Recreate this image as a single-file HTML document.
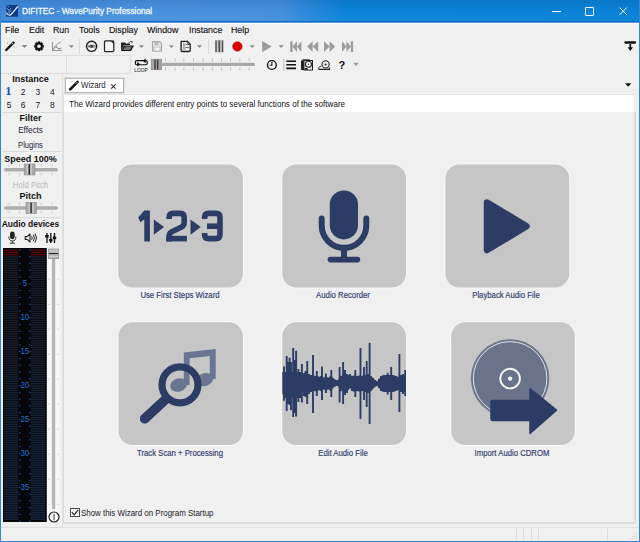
<!DOCTYPE html>
<html><head><meta charset="utf-8">
<style>
*{margin:0;padding:0;box-sizing:border-box}
html,body{width:640px;height:542px;overflow:hidden;background:#f0f0f0;font-family:"Liberation Sans",sans-serif;color:#000}
.a{position:absolute}
.t{position:absolute;white-space:nowrap;line-height:1}
svg{position:absolute;overflow:visible}
</style></head><body>
<!-- window frame -->
<div class="a" style="left:0;top:0;width:640px;height:542px;background:#f0f0f0"></div>
<!-- title bar -->
<div class="a" style="left:0;top:0;width:640px;height:22px;background:linear-gradient(to right,#3f89d8 0,#4a92de 120px,#4690dd 280px,#2a88da 310px,#0c84d8 345px,#0a82d6 640px)"></div><div class="a" style="left:0;top:0;width:640px;height:22px;background:linear-gradient(to bottom,rgba(0,40,110,0.12),rgba(0,40,110,0) 55%,rgba(255,255,255,0.03) 100%)"></div>
<div class="a" style="left:0;top:21px;width:640px;height:1px;background:#0a6ec6"></div><div class="a" style="left:0;top:22px;width:640px;height:1px;background:#5a9ad6"></div><div class="a" style="left:1px;top:23px;width:638px;height:1px;background:#fbfbfb"></div>
<div class="a" style="left:0;top:0;width:1px;height:542px;background:#3a84d0"></div>
<div class="a" style="left:639px;top:0;width:1px;height:542px;background:#3a84d0"></div>
<div class="a" style="left:0;top:541px;width:640px;height:1px;background:#3a84d0"></div>
<!-- app icon -->
<svg style="left:0;top:0" width="30" height="22" viewBox="0 0 30 22">
<rect x="6.3" y="5" width="11.7" height="11.7" fill="#0b3d86"/>
<path d="M6.5 12.8Q8.3 15.6 10 15.2Q12 14 17.8 6.4" stroke="#f0f4fa" stroke-width="1.2" fill="none"/>
<path d="M7 8.2Q9.8 9.5 9.2 13.8" stroke="#9bb8de" stroke-width="0.9" fill="none"/>
<path d="M7.2 5.8Q8.5 6.2 9 7" stroke="#9bb8de" stroke-width="0.8" fill="none"/>
<path d="M10.5 8Q11.2 10 10.6 12" stroke="#6f95c8" stroke-width="0.8" fill="none"/>
</svg>
<div class="t" style="left:22px;top:6.4px;font-size:9.8px;color:#f2f7fc;transform:scaleX(0.85);transform-origin:0 0;-webkit-text-stroke:0.3px #f2f7fc">DIFITEC - WavePurity Professional</div>
<!-- caption buttons -->
<div class="a" style="left:552px;top:11px;width:8.6px;height:1px;background:#f4f8fc"></div>
<div class="a" style="left:585px;top:7px;width:8.6px;height:8.6px;border:1px solid #f4f8fc;border-radius:1px"></div>
<svg style="left:619px;top:7px" width="9" height="9" viewBox="0 0 9 9"><path d="M0.6 0.6L7.8 7.8M7.8 0.6L0.6 7.8" stroke="#f4f8fc" stroke-width="1"/></svg>

<!-- menu -->
<div class="t" style="left:5px;top:24.5px;font-size:9.8px;color:#111;transform:scaleX(0.9);transform-origin:0 0;-webkit-text-stroke:0.15px #111">File</div>
<div class="t" style="left:29px;top:24.5px;font-size:9.8px;color:#111;transform:scaleX(0.9);transform-origin:0 0;-webkit-text-stroke:0.15px #111">Edit</div>
<div class="t" style="left:53px;top:24.5px;font-size:9.8px;color:#111;transform:scaleX(0.9);transform-origin:0 0;-webkit-text-stroke:0.15px #111">Run</div>
<div class="t" style="left:79px;top:24.5px;font-size:9.8px;color:#111;transform:scaleX(0.9);transform-origin:0 0;-webkit-text-stroke:0.15px #111">Tools</div>
<div class="t" style="left:109px;top:24.5px;font-size:9.8px;color:#111;transform:scaleX(0.9);transform-origin:0 0;-webkit-text-stroke:0.15px #111">Display</div>
<div class="t" style="left:147px;top:24.5px;font-size:9.8px;color:#111;transform:scaleX(0.9);transform-origin:0 0;-webkit-text-stroke:0.15px #111">Window</div>
<div class="t" style="left:189px;top:24.5px;font-size:9.8px;color:#111;transform:scaleX(0.9);transform-origin:0 0;-webkit-text-stroke:0.15px #111">Instance</div>
<div class="t" style="left:231px;top:24.5px;font-size:9.8px;color:#111;transform:scaleX(0.9);transform-origin:0 0;-webkit-text-stroke:0.15px #111">Help</div>

<!-- toolbar row1 -->
<svg style="left:0;top:0" width="640" height="80" viewBox="0 0 640 80">
<!-- wand -->
<line x1="6.2" y1="50" x2="13.6" y2="42.6" stroke="#111" stroke-width="2.3" stroke-linecap="round"/>
<line x1="12" y1="44.2" x2="13.2" y2="43" stroke="#ddd" stroke-width="0.9"/>
<circle cx="7.5" cy="43" r="0.7" fill="#aaa"/><circle cx="14.2" cy="46.8" r="0.7" fill="#aaa"/><circle cx="10" cy="41.5" r="0.5" fill="#bbb"/>
<path d="M21.5 45H27.5L24.5 48Z" fill="#8c8c8c"/>
<!-- gear -->
<path d="M42.23 44.96 L43.78 45.23 L43.78 47.37 L42.23 47.64 L42.23 47.64 L43.14 48.93 L41.63 50.44 L40.34 49.53 L40.34 49.53 L40.07 51.08 L37.93 51.08 L37.66 49.53 L37.66 49.53 L36.37 50.44 L34.86 48.93 L35.77 47.64 L35.77 47.64 L34.22 47.37 L34.22 45.23 L35.77 44.96 L35.77 44.96 L34.86 43.67 L36.37 42.16 L37.66 43.07 L37.66 43.07 L37.93 41.52 L40.07 41.52 L40.34 43.07 L40.34 43.07 L41.63 42.16 L43.14 43.67 L42.23 44.96Z" fill="#111" stroke="#111" stroke-width="0.3" stroke-linejoin="round"/>
<circle cx="39" cy="46.3" r="1.8" fill="#f0f0f0"/>
<!-- chart grey -->
<path d="M52.5 42V50.5H62" stroke="#9a9a9a" stroke-width="1.1" fill="none" stroke-dasharray="none"/>
<path d="M53.5 50Q55 45 57 47.5Q59 50 61 48" stroke="#8a8a8a" stroke-width="1.1" fill="none"/>
<path d="M54 48Q57 43 61 42" stroke="#9a9a9a" stroke-width="1" fill="none"/>
<path d="M68.7 45.2H74L71.35 48Z" fill="#8c8c8c"/>
<!-- sep -->
<rect x="79" y="39" width="1" height="15" fill="#dadada"/>
<!-- disc -->
<circle cx="91.6" cy="46.3" r="5.1" stroke="#1e1e1e" stroke-width="1.4" fill="#f2f2f2"/>
<ellipse cx="91.6" cy="46.3" rx="4.2" ry="1.7" fill="#8a8a8a"/>
<circle cx="91.6" cy="46.3" r="1.3" fill="#333"/>
<!-- page -->
<path d="M105.6 40.9H111.4L113.8 43.3V50.6Q113.8 51.7 112.7 51.7H105.6Q104.5 51.7 104.5 50.6V42Q104.5 40.9 105.6 40.9Z" stroke="#222" stroke-width="1.25" fill="#f6f6f6" stroke-linejoin="round"/>
<path d="M111 40.6L114.2 43.8V40.6Z" fill="#222"/>
<!-- folder -->
<path d="M121 42.5H125L126 43.5H130V45H124L121 50.5Z" fill="#222"/>
<path d="M121 51H131L134 45.5H124Z" fill="#111"/>
<path d="M123 50L125.2 46.5H132L130 50Z" fill="#777"/>
<path d="M128.5 43Q130.5 40.5 132.5 42" stroke="#333" stroke-width="0.9" fill="none"/><path d="M132 41L133 42.5L131.4 42.7Z" fill="#333"/>
<path d="M138.8 45.3H144L141.4 48Z" fill="#8c8c8c"/>
<!-- save grey -->
<path d="M152.5 41.5H159.5L161.5 43.5V51H152.5Z" stroke="#a8a8a8" stroke-width="1.1" fill="#e4e4e4"/>
<rect x="154.5" y="41.5" width="4" height="3.5" fill="#b8b8b8"/><rect x="154" y="47" width="6" height="4" fill="#f4f4f4" stroke="#b0b0b0" stroke-width="0.7"/>
<path d="M168.8 45.3H174L171.4 48Z" fill="#8c8c8c"/>
<!-- props -->
<path d="M181.1 41.4H187.4L190.2 44.2V50.2Q190.2 51.5 188.9 51.5H182.4Q181.1 51.5 181.1 50.2Z" stroke="#1e1e1e" stroke-width="1.35" fill="#f6f6f6" stroke-linejoin="round"/>
<path d="M183.4 42.8V50.3M184.8 42.8V50.3" stroke="#777" stroke-width="0.7"/>
<path d="M185.6 44.6H188.8M185.6 47.6H188.8M187 42.6L189.5 45.2" stroke="#444" stroke-width="0.9"/>
<path d="M196.8 45.3H202.2L199.5 48Z" fill="#8c8c8c"/>
<rect x="208" y="39" width="1" height="15" fill="#dadada"/>
<!-- bars -->
<rect x="215.4" y="40.4" width="7.8" height="11.8" fill="#9a9a9a"/>
<rect x="215.4" y="40.4" width="1.1" height="11.8" fill="#4a4a4a"/><rect x="218.8" y="40.4" width="1" height="11.8" fill="#3e3e3e"/><rect x="222.1" y="40.4" width="1.1" height="11.8" fill="#4a4a4a"/>
<rect x="217" y="40.4" width="1" height="11.8" fill="#c8c8c8"/><rect x="220.5" y="40.4" width="1" height="11.8" fill="#c8c8c8"/>
<!-- record -->
<circle cx="237.4" cy="46.5" r="4.75" fill="#dc0000" stroke="#b00000" stroke-width="0.5"/>
<path d="M249.5 45.3H254.8L252.15 48Z" fill="#8c8c8c"/>
<!-- play grey -->
<path d="M262.2 41V52.2L271.6 46.6Z" fill="#9c9c9c"/>
<path d="M278.6 45.3H283.8L281.2 48Z" fill="#8c8c8c"/>
<!-- skip back -->
<path d="M290.2 41.2H292.6V52H290.2Z M292.6 46.6L297 41.2V52Z M297 46.6L301.4 41.2V52Z" fill="#9c9c9c"/>
<!-- rewind -->
<path d="M307 46.6L312.6 41.2V52Z M312.6 46.6L318.2 41.2V52Z" fill="#9c9c9c"/>
<!-- ff -->
<path d="M324 41.2V52L329.6 46.6Z M329.6 41.2V52L335.2 46.6Z" fill="#9c9c9c"/>
<!-- skip fwd -->
<path d="M342 41.2V52L346.4 46.6Z M346.4 41.2V52L350.8 46.6Z M350.8 41.2H353.2V52H350.8Z" fill="#9c9c9c"/>
<!-- pin right -->
<path d="M625.4 42.5H635" stroke="#111" stroke-width="2.3" stroke-linecap="round"/><path d="M630.3 44V48.5" stroke="#111" stroke-width="1.6"/><path d="M627.6 47.2H633L630.3 51Z" fill="#111"/>
</svg>


<!-- row 2 panes -->
<div class="a" style="left:1px;top:55px;width:130px;height:19px;border:1px solid #dcdcdc;border-left:none"></div>
<div class="a" style="left:66px;top:55px;width:1px;height:19px;background:#dcdcdc"></div>
<svg style="left:0;top:0" width="640" height="80" viewBox="0 0 640 80">
<!-- loop -->
<rect x="135.4" y="60.6" width="11.8" height="4.1" rx="1.2" stroke="#111" stroke-width="1.15" fill="none"/>
<path d="M145.6 58.4V63.2L142.6 60.8Z" fill="#111"/>
<path d="M137.2 61.8V66.6L140.2 64.2Z" fill="#111"/>
<text x="134.2" y="71.6" font-family="Liberation Sans" font-size="6" fill="#151515" textLength="13.6" lengthAdjust="spacingAndGlyphs">LOOP</text>
<!-- slider -->
<rect x="162" y="62.8" width="93" height="3.1" rx="1.5" fill="#a9a9a9"/>
<g stroke="#bdbdbd" stroke-width="0.9">
<path d="M165.5 58V61.3M175.1 58V61.3M183.9 58V61.3M193.5 58V61.3M203.1 58V61.3M212.4 58V61.3M221.5 58V61.3M230.6 58V61.3M239.9 58V61.3M249.2 58V61.3"/>
<path d="M165.5 67.3V70.6M175.1 67.3V70.6M183.9 67.3V70.6M193.5 67.3V70.6M203.1 67.3V70.6M212.4 67.3V70.6M221.5 67.3V70.6M230.6 67.3V70.6M239.9 67.3V70.6M249.2 67.3V70.6"/>
</g>
<rect x="151.2" y="59.2" width="10.5" height="10.6" fill="#a4a4a4" stroke="#8a8a8a" stroke-width="0.6"/>
<rect x="154.4" y="59.5" width="1.3" height="10" fill="#333"/><rect x="157" y="59.5" width="1.3" height="10" fill="#333"/>
<!-- clock -->
<circle cx="271.9" cy="65" r="4.4" stroke="#111" stroke-width="1.4" fill="#f4f4f4"/>
<path d="M271.9 62V65.3H269.8" stroke="#111" stroke-width="1.1" fill="none"/>
<!-- list -->
<path d="M286.3 61.2H296M286.3 64.8H296M286.3 68.4H296" stroke="#111" stroke-width="1.6"/>
<path d="M283.8 59V70.8" stroke="#999" stroke-width="0.9" stroke-dasharray="1 0.6"/>
<!-- cd book -->
<path d="M301 60.5L303 59H310L309 60.5Z" fill="#666"/>
<rect x="301" y="60.5" width="3" height="9.5" fill="#222"/>
<rect x="304" y="60.5" width="8.5" height="9.5" fill="#eee" stroke="#222" stroke-width="1"/>
<circle cx="308.5" cy="64.3" r="3" fill="#fff" stroke="#222" stroke-width="1.1"/><circle cx="308.5" cy="64.3" r="0.8" fill="#222"/>
<rect x="305" y="68" width="2.5" height="2" fill="#222"/>
<!-- scan -->
<circle cx="325.6" cy="64.4" r="3.6" fill="#eee" stroke="#222" stroke-width="1.1"/><circle cx="325.6" cy="64.4" r="1" fill="#222"/>
<path d="M318.5 69.3H329.5V67.5" stroke="#222" stroke-width="1.2" fill="none"/>
<path d="M318.3 69.3Q318 66.5 321.5 66" stroke="#444" stroke-width="1" fill="none"/>
<!-- ? -->
<text x="338.6" y="69.2" font-family="Liberation Sans" font-size="11" font-weight="bold" fill="#111">?</text>
<path d="M353 62.8H358.8L355.9 65.9Z" fill="#9a9a9a"/>
</svg>

<!-- left panel -->
<div class="t" style="left:0;width:61px;text-align:center;top:75.2px;font-size:9px;font-weight:bold;color:#111">Instance</div>
<div class="t" style="left:5.2px;top:85.2px;font-size:12.5px;font-weight:bold;font-family:'Liberation Serif',serif;color:#1d56a6">1</div>
<div class="t" style="left:20.8px;top:87.6px;font-size:8.5px;color:#1a1a2a">2</div>
<div class="t" style="left:35.6px;top:87.6px;font-size:8.5px;color:#1a1a2a">3</div>
<div class="t" style="left:50px;top:87.6px;font-size:8.5px;color:#1a1a2a">4</div>
<div class="t" style="left:6.8px;top:100.8px;font-size:8.5px;color:#1a1a2a">5</div>
<div class="t" style="left:20.8px;top:100.8px;font-size:8.5px;color:#1a1a2a">6</div>
<div class="t" style="left:35.6px;top:100.8px;font-size:8.5px;color:#1a1a2a">7</div>
<div class="t" style="left:50px;top:100.8px;font-size:8.5px;color:#1a1a2a">8</div>
<div class="a" style="left:2px;top:112px;width:59px;height:1px;background:#dadada"></div>
<div class="t" style="left:0;width:61px;text-align:center;top:114.4px;font-size:9px;font-weight:bold;color:#111">Filter</div>
<div class="t" style="left:0;width:61px;text-align:center;top:126px;font-size:9px;color:#1c2238;transform:scaleX(0.9);transform-origin:30.5px 0">Effects</div>
<div class="t" style="left:0;width:61px;text-align:center;top:140.6px;font-size:9px;color:#1c2238;transform:scaleX(0.84);transform-origin:30.5px 0">Plugins</div>
<div class="a" style="left:2px;top:151px;width:59px;height:1px;background:#dadada"></div>
<div class="t" style="left:0;width:61px;text-align:center;top:155px;font-size:9px;font-weight:bold;color:#111">Speed 100%</div>
<div class="t" style="left:0;width:61px;text-align:center;top:180.8px;font-size:9px;color:#b8b8b8;transform:scaleX(0.86);transform-origin:30.5px 0">Hold Pitch</div>
<div class="t" style="left:0;width:61px;text-align:center;top:192.4px;font-size:9px;font-weight:bold;color:#111">Pitch</div>
<div class="a" style="left:2px;top:217px;width:59px;height:1px;background:#dadada"></div>
<div class="t" style="left:0;width:61px;text-align:center;top:220.2px;font-size:8.5px;font-weight:bold;color:#111">Audio devices</div>
<svg style="left:0;top:0" width="64" height="542" viewBox="0 0 64 542">
<!-- speed slider -->
<g stroke="#c4c4c4" stroke-width="0.9"><path d="M9 164V166.5M19.5 164V166.5M41 164V166.5M52 164V166.5M9 173V175.5M19.5 173V175.5M41 173V175.5M52 173V175.5"/>
<path d="M9 202.5V205M19.5 202.5V205M41 202.5V205M52 202.5V205M9 211V213.5M19.5 211V213.5M41 211V213.5M52 211V213.5"/></g>
<rect x="4" y="168" width="54" height="3.4" rx="1.7" fill="#acacac"/>
<rect x="24.2" y="164" width="10.8" height="11" fill="#a8a8a8" stroke="#8c8c8c" stroke-width="0.6"/>
<rect x="26.6" y="164.3" width="1.2" height="10.4" fill="#cfcfcf"/><rect x="28.7" y="164.3" width="1.2" height="10.4" fill="#1a1a1a"/><rect x="30.6" y="164.3" width="1.2" height="10.4" fill="#d2d2d2"/>
<!-- pitch slider -->
<rect x="4" y="206.3" width="54" height="3.4" rx="1.7" fill="#acacac"/>
<rect x="26" y="202.4" width="10.4" height="11" fill="#a8a8a8" stroke="#8c8c8c" stroke-width="0.6"/>
<rect x="28.4" y="202.7" width="1.2" height="10.4" fill="#cfcfcf"/><rect x="30.5" y="202.7" width="1.2" height="10.4" fill="#1a1a1a"/><rect x="32.4" y="202.7" width="1.2" height="10.4" fill="#d2d2d2"/>
<!-- mic -->
<rect x="10" y="231.6" width="4.7" height="7.6" rx="2.35" fill="#222"/>
<path d="M8.8 236.5Q8.8 241 12.35 241Q15.9 241 15.9 236.5" stroke="#333" stroke-width="1" fill="none"/>
<path d="M12.35 241V243M9.6 243.2H15" stroke="#333" stroke-width="1"/>
<!-- speaker -->
<path d="M25.2 236.6H27.1L30 234V242L27.1 239.4H25.2Z" stroke="#222" stroke-width="1.1" fill="#f0f0f0" stroke-linejoin="round"/>
<path d="M31.6 236.3Q32.8 238 31.6 239.7M33.3 234.8Q35.4 238 33.3 241.2M35 233.4Q38 238 35 242.6" stroke="#222" stroke-width="1" fill="none"/>
<!-- mixer -->
<path d="M47 233V243M50.8 233V243M54.5 233V243" stroke="#111" stroke-width="1.3"/>
<rect x="45.3" y="235" width="3.4" height="2.6" fill="#111"/><rect x="49.1" y="239" width="3.4" height="2.6" fill="#111"/><rect x="52.8" y="236.5" width="3.4" height="2.6" fill="#111"/>
</svg>
<div class="a" style="left:3px;top:248px;width:43.6px;height:273.8px;background:#05070a"></div>
<svg style="left:0;top:0" width="64" height="542" viewBox="0 0 64 542">
<rect x="4" y="249.60" width="14.2" height="1.2" fill="#660808"/><rect x="31" y="249.60" width="14.2" height="1.2" fill="#660808"/><rect x="4" y="251.86" width="14.2" height="1.2" fill="#660808"/><rect x="31" y="251.86" width="14.2" height="1.2" fill="#660808"/><rect x="4" y="254.12" width="14.2" height="1.2" fill="#660808"/><rect x="31" y="254.12" width="14.2" height="1.2" fill="#660808"/><rect x="4" y="256.39" width="14.2" height="1.2" fill="#1b2330"/><rect x="31" y="256.39" width="14.2" height="1.2" fill="#1b2330"/><rect x="4" y="258.65" width="14.2" height="1.2" fill="#1b2330"/><rect x="31" y="258.65" width="14.2" height="1.2" fill="#1b2330"/><rect x="4" y="260.91" width="14.2" height="1.2" fill="#1b2330"/><rect x="31" y="260.91" width="14.2" height="1.2" fill="#1b2330"/><rect x="4" y="263.17" width="14.2" height="1.2" fill="#1b2330"/><rect x="31" y="263.17" width="14.2" height="1.2" fill="#1b2330"/><rect x="4" y="265.43" width="14.2" height="1.2" fill="#1b2330"/><rect x="31" y="265.43" width="14.2" height="1.2" fill="#1b2330"/><rect x="4" y="267.70" width="14.2" height="1.2" fill="#1b2330"/><rect x="31" y="267.70" width="14.2" height="1.2" fill="#1b2330"/><rect x="4" y="269.96" width="14.2" height="1.2" fill="#1b2330"/><rect x="31" y="269.96" width="14.2" height="1.2" fill="#1b2330"/><rect x="4" y="272.22" width="14.2" height="1.2" fill="#1b2330"/><rect x="31" y="272.22" width="14.2" height="1.2" fill="#1b2330"/><rect x="4" y="274.48" width="14.2" height="1.2" fill="#1b2330"/><rect x="31" y="274.48" width="14.2" height="1.2" fill="#1b2330"/><rect x="4" y="276.74" width="14.2" height="1.2" fill="#1b2330"/><rect x="31" y="276.74" width="14.2" height="1.2" fill="#1b2330"/><rect x="4" y="279.01" width="14.2" height="1.2" fill="#1b2330"/><rect x="31" y="279.01" width="14.2" height="1.2" fill="#1b2330"/><rect x="4" y="281.27" width="14.2" height="1.2" fill="#1b2330"/><rect x="31" y="281.27" width="14.2" height="1.2" fill="#1b2330"/><rect x="4" y="283.53" width="14.2" height="1.2" fill="#1b2330"/><rect x="31" y="283.53" width="14.2" height="1.2" fill="#1b2330"/><rect x="4" y="285.79" width="14.2" height="1.2" fill="#1b2330"/><rect x="31" y="285.79" width="14.2" height="1.2" fill="#1b2330"/><rect x="4" y="288.05" width="14.2" height="1.2" fill="#1b2330"/><rect x="31" y="288.05" width="14.2" height="1.2" fill="#1b2330"/><rect x="4" y="290.32" width="14.2" height="1.2" fill="#1b2330"/><rect x="31" y="290.32" width="14.2" height="1.2" fill="#1b2330"/><rect x="4" y="292.58" width="14.2" height="1.2" fill="#1b2330"/><rect x="31" y="292.58" width="14.2" height="1.2" fill="#1b2330"/><rect x="4" y="294.84" width="14.2" height="1.2" fill="#1b2330"/><rect x="31" y="294.84" width="14.2" height="1.2" fill="#1b2330"/><rect x="4" y="297.10" width="14.2" height="1.2" fill="#1b2330"/><rect x="31" y="297.10" width="14.2" height="1.2" fill="#1b2330"/><rect x="4" y="299.36" width="14.2" height="1.2" fill="#1b2330"/><rect x="31" y="299.36" width="14.2" height="1.2" fill="#1b2330"/><rect x="4" y="301.63" width="14.2" height="1.2" fill="#1b2330"/><rect x="31" y="301.63" width="14.2" height="1.2" fill="#1b2330"/><rect x="4" y="303.89" width="14.2" height="1.2" fill="#1b2330"/><rect x="31" y="303.89" width="14.2" height="1.2" fill="#1b2330"/><rect x="4" y="306.15" width="14.2" height="1.2" fill="#1b2330"/><rect x="31" y="306.15" width="14.2" height="1.2" fill="#1b2330"/><rect x="4" y="308.41" width="14.2" height="1.2" fill="#1b2330"/><rect x="31" y="308.41" width="14.2" height="1.2" fill="#1b2330"/><rect x="4" y="310.67" width="14.2" height="1.2" fill="#1b2330"/><rect x="31" y="310.67" width="14.2" height="1.2" fill="#1b2330"/><rect x="4" y="312.94" width="14.2" height="1.2" fill="#1b2330"/><rect x="31" y="312.94" width="14.2" height="1.2" fill="#1b2330"/><rect x="4" y="315.20" width="14.2" height="1.2" fill="#1b2330"/><rect x="31" y="315.20" width="14.2" height="1.2" fill="#1b2330"/><rect x="4" y="317.46" width="14.2" height="1.2" fill="#1b2330"/><rect x="31" y="317.46" width="14.2" height="1.2" fill="#1b2330"/><rect x="4" y="319.72" width="14.2" height="1.2" fill="#1b2330"/><rect x="31" y="319.72" width="14.2" height="1.2" fill="#1b2330"/><rect x="4" y="321.98" width="14.2" height="1.2" fill="#1b2330"/><rect x="31" y="321.98" width="14.2" height="1.2" fill="#1b2330"/><rect x="4" y="324.25" width="14.2" height="1.2" fill="#1b2330"/><rect x="31" y="324.25" width="14.2" height="1.2" fill="#1b2330"/><rect x="4" y="326.51" width="14.2" height="1.2" fill="#1b2330"/><rect x="31" y="326.51" width="14.2" height="1.2" fill="#1b2330"/><rect x="4" y="328.77" width="14.2" height="1.2" fill="#1b2330"/><rect x="31" y="328.77" width="14.2" height="1.2" fill="#1b2330"/><rect x="4" y="331.03" width="14.2" height="1.2" fill="#1b2330"/><rect x="31" y="331.03" width="14.2" height="1.2" fill="#1b2330"/><rect x="4" y="333.29" width="14.2" height="1.2" fill="#1b2330"/><rect x="31" y="333.29" width="14.2" height="1.2" fill="#1b2330"/><rect x="4" y="335.56" width="14.2" height="1.2" fill="#1b2330"/><rect x="31" y="335.56" width="14.2" height="1.2" fill="#1b2330"/><rect x="4" y="337.82" width="14.2" height="1.2" fill="#1b2330"/><rect x="31" y="337.82" width="14.2" height="1.2" fill="#1b2330"/><rect x="4" y="340.08" width="14.2" height="1.2" fill="#1b2330"/><rect x="31" y="340.08" width="14.2" height="1.2" fill="#1b2330"/><rect x="4" y="342.34" width="14.2" height="1.2" fill="#1b2330"/><rect x="31" y="342.34" width="14.2" height="1.2" fill="#1b2330"/><rect x="4" y="344.60" width="14.2" height="1.2" fill="#1b2330"/><rect x="31" y="344.60" width="14.2" height="1.2" fill="#1b2330"/><rect x="4" y="346.87" width="14.2" height="1.2" fill="#1b2330"/><rect x="31" y="346.87" width="14.2" height="1.2" fill="#1b2330"/><rect x="4" y="349.13" width="14.2" height="1.2" fill="#1b2330"/><rect x="31" y="349.13" width="14.2" height="1.2" fill="#1b2330"/><rect x="4" y="351.39" width="14.2" height="1.2" fill="#1b2330"/><rect x="31" y="351.39" width="14.2" height="1.2" fill="#1b2330"/><rect x="4" y="353.65" width="14.2" height="1.2" fill="#1b2330"/><rect x="31" y="353.65" width="14.2" height="1.2" fill="#1b2330"/><rect x="4" y="355.91" width="14.2" height="1.2" fill="#1b2330"/><rect x="31" y="355.91" width="14.2" height="1.2" fill="#1b2330"/><rect x="4" y="358.18" width="14.2" height="1.2" fill="#1b2330"/><rect x="31" y="358.18" width="14.2" height="1.2" fill="#1b2330"/><rect x="4" y="360.44" width="14.2" height="1.2" fill="#1b2330"/><rect x="31" y="360.44" width="14.2" height="1.2" fill="#1b2330"/><rect x="4" y="362.70" width="14.2" height="1.2" fill="#1b2330"/><rect x="31" y="362.70" width="14.2" height="1.2" fill="#1b2330"/><rect x="4" y="364.96" width="14.2" height="1.2" fill="#1b2330"/><rect x="31" y="364.96" width="14.2" height="1.2" fill="#1b2330"/><rect x="4" y="367.22" width="14.2" height="1.2" fill="#1b2330"/><rect x="31" y="367.22" width="14.2" height="1.2" fill="#1b2330"/><rect x="4" y="369.49" width="14.2" height="1.2" fill="#1b2330"/><rect x="31" y="369.49" width="14.2" height="1.2" fill="#1b2330"/><rect x="4" y="371.75" width="14.2" height="1.2" fill="#1b2330"/><rect x="31" y="371.75" width="14.2" height="1.2" fill="#1b2330"/><rect x="4" y="374.01" width="14.2" height="1.2" fill="#1b2330"/><rect x="31" y="374.01" width="14.2" height="1.2" fill="#1b2330"/><rect x="4" y="376.27" width="14.2" height="1.2" fill="#1b2330"/><rect x="31" y="376.27" width="14.2" height="1.2" fill="#1b2330"/><rect x="4" y="378.53" width="14.2" height="1.2" fill="#1b2330"/><rect x="31" y="378.53" width="14.2" height="1.2" fill="#1b2330"/><rect x="4" y="380.80" width="14.2" height="1.2" fill="#1b2330"/><rect x="31" y="380.80" width="14.2" height="1.2" fill="#1b2330"/><rect x="4" y="383.06" width="14.2" height="1.2" fill="#1b2330"/><rect x="31" y="383.06" width="14.2" height="1.2" fill="#1b2330"/><rect x="4" y="385.32" width="14.2" height="1.2" fill="#1b2330"/><rect x="31" y="385.32" width="14.2" height="1.2" fill="#1b2330"/><rect x="4" y="387.58" width="14.2" height="1.2" fill="#1b2330"/><rect x="31" y="387.58" width="14.2" height="1.2" fill="#1b2330"/><rect x="4" y="389.84" width="14.2" height="1.2" fill="#1b2330"/><rect x="31" y="389.84" width="14.2" height="1.2" fill="#1b2330"/><rect x="4" y="392.11" width="14.2" height="1.2" fill="#1b2330"/><rect x="31" y="392.11" width="14.2" height="1.2" fill="#1b2330"/><rect x="4" y="394.37" width="14.2" height="1.2" fill="#1b2330"/><rect x="31" y="394.37" width="14.2" height="1.2" fill="#1b2330"/><rect x="4" y="396.63" width="14.2" height="1.2" fill="#1b2330"/><rect x="31" y="396.63" width="14.2" height="1.2" fill="#1b2330"/><rect x="4" y="398.89" width="14.2" height="1.2" fill="#1b2330"/><rect x="31" y="398.89" width="14.2" height="1.2" fill="#1b2330"/><rect x="4" y="401.15" width="14.2" height="1.2" fill="#1b2330"/><rect x="31" y="401.15" width="14.2" height="1.2" fill="#1b2330"/><rect x="4" y="403.42" width="14.2" height="1.2" fill="#1b2330"/><rect x="31" y="403.42" width="14.2" height="1.2" fill="#1b2330"/><rect x="4" y="405.68" width="14.2" height="1.2" fill="#1b2330"/><rect x="31" y="405.68" width="14.2" height="1.2" fill="#1b2330"/><rect x="4" y="407.94" width="14.2" height="1.2" fill="#1b2330"/><rect x="31" y="407.94" width="14.2" height="1.2" fill="#1b2330"/><rect x="4" y="410.20" width="14.2" height="1.2" fill="#1b2330"/><rect x="31" y="410.20" width="14.2" height="1.2" fill="#1b2330"/><rect x="4" y="412.46" width="14.2" height="1.2" fill="#1b2330"/><rect x="31" y="412.46" width="14.2" height="1.2" fill="#1b2330"/><rect x="4" y="414.73" width="14.2" height="1.2" fill="#1b2330"/><rect x="31" y="414.73" width="14.2" height="1.2" fill="#1b2330"/><rect x="4" y="416.99" width="14.2" height="1.2" fill="#1b2330"/><rect x="31" y="416.99" width="14.2" height="1.2" fill="#1b2330"/><rect x="4" y="419.25" width="14.2" height="1.2" fill="#1b2330"/><rect x="31" y="419.25" width="14.2" height="1.2" fill="#1b2330"/><rect x="4" y="421.51" width="14.2" height="1.2" fill="#1b2330"/><rect x="31" y="421.51" width="14.2" height="1.2" fill="#1b2330"/><rect x="4" y="423.77" width="14.2" height="1.2" fill="#1b2330"/><rect x="31" y="423.77" width="14.2" height="1.2" fill="#1b2330"/><rect x="4" y="426.04" width="14.2" height="1.2" fill="#1b2330"/><rect x="31" y="426.04" width="14.2" height="1.2" fill="#1b2330"/><rect x="4" y="428.30" width="14.2" height="1.2" fill="#1b2330"/><rect x="31" y="428.30" width="14.2" height="1.2" fill="#1b2330"/><rect x="4" y="430.56" width="14.2" height="1.2" fill="#1b2330"/><rect x="31" y="430.56" width="14.2" height="1.2" fill="#1b2330"/><rect x="4" y="432.82" width="14.2" height="1.2" fill="#1b2330"/><rect x="31" y="432.82" width="14.2" height="1.2" fill="#1b2330"/><rect x="4" y="435.08" width="14.2" height="1.2" fill="#1b2330"/><rect x="31" y="435.08" width="14.2" height="1.2" fill="#1b2330"/><rect x="4" y="437.35" width="14.2" height="1.2" fill="#1b2330"/><rect x="31" y="437.35" width="14.2" height="1.2" fill="#1b2330"/><rect x="4" y="439.61" width="14.2" height="1.2" fill="#1b2330"/><rect x="31" y="439.61" width="14.2" height="1.2" fill="#1b2330"/><rect x="4" y="441.87" width="14.2" height="1.2" fill="#1b2330"/><rect x="31" y="441.87" width="14.2" height="1.2" fill="#1b2330"/><rect x="4" y="444.13" width="14.2" height="1.2" fill="#1b2330"/><rect x="31" y="444.13" width="14.2" height="1.2" fill="#1b2330"/><rect x="4" y="446.39" width="14.2" height="1.2" fill="#1b2330"/><rect x="31" y="446.39" width="14.2" height="1.2" fill="#1b2330"/><rect x="4" y="448.66" width="14.2" height="1.2" fill="#1b2330"/><rect x="31" y="448.66" width="14.2" height="1.2" fill="#1b2330"/><rect x="4" y="450.92" width="14.2" height="1.2" fill="#1b2330"/><rect x="31" y="450.92" width="14.2" height="1.2" fill="#1b2330"/><rect x="4" y="453.18" width="14.2" height="1.2" fill="#1b2330"/><rect x="31" y="453.18" width="14.2" height="1.2" fill="#1b2330"/><rect x="4" y="455.44" width="14.2" height="1.2" fill="#1b2330"/><rect x="31" y="455.44" width="14.2" height="1.2" fill="#1b2330"/><rect x="4" y="457.70" width="14.2" height="1.2" fill="#1b2330"/><rect x="31" y="457.70" width="14.2" height="1.2" fill="#1b2330"/><rect x="4" y="459.97" width="14.2" height="1.2" fill="#1b2330"/><rect x="31" y="459.97" width="14.2" height="1.2" fill="#1b2330"/><rect x="4" y="462.23" width="14.2" height="1.2" fill="#1b2330"/><rect x="31" y="462.23" width="14.2" height="1.2" fill="#1b2330"/><rect x="4" y="464.49" width="14.2" height="1.2" fill="#1b2330"/><rect x="31" y="464.49" width="14.2" height="1.2" fill="#1b2330"/><rect x="4" y="466.75" width="14.2" height="1.2" fill="#1b2330"/><rect x="31" y="466.75" width="14.2" height="1.2" fill="#1b2330"/><rect x="4" y="469.01" width="14.2" height="1.2" fill="#1b2330"/><rect x="31" y="469.01" width="14.2" height="1.2" fill="#1b2330"/><rect x="4" y="471.28" width="14.2" height="1.2" fill="#1b2330"/><rect x="31" y="471.28" width="14.2" height="1.2" fill="#1b2330"/><rect x="4" y="473.54" width="14.2" height="1.2" fill="#1b2330"/><rect x="31" y="473.54" width="14.2" height="1.2" fill="#1b2330"/><rect x="4" y="475.80" width="14.2" height="1.2" fill="#1b2330"/><rect x="31" y="475.80" width="14.2" height="1.2" fill="#1b2330"/><rect x="4" y="478.06" width="14.2" height="1.2" fill="#1b2330"/><rect x="31" y="478.06" width="14.2" height="1.2" fill="#1b2330"/><rect x="4" y="480.32" width="14.2" height="1.2" fill="#1b2330"/><rect x="31" y="480.32" width="14.2" height="1.2" fill="#1b2330"/><rect x="4" y="482.59" width="14.2" height="1.2" fill="#1b2330"/><rect x="31" y="482.59" width="14.2" height="1.2" fill="#1b2330"/><rect x="4" y="484.85" width="14.2" height="1.2" fill="#1b2330"/><rect x="31" y="484.85" width="14.2" height="1.2" fill="#1b2330"/><rect x="4" y="487.11" width="14.2" height="1.2" fill="#1b2330"/><rect x="31" y="487.11" width="14.2" height="1.2" fill="#1b2330"/><rect x="4" y="489.37" width="14.2" height="1.2" fill="#1b2330"/><rect x="31" y="489.37" width="14.2" height="1.2" fill="#1b2330"/><rect x="4" y="491.63" width="14.2" height="1.2" fill="#1b2330"/><rect x="31" y="491.63" width="14.2" height="1.2" fill="#1b2330"/><rect x="4" y="493.90" width="14.2" height="1.2" fill="#1b2330"/><rect x="31" y="493.90" width="14.2" height="1.2" fill="#1b2330"/><rect x="4" y="496.16" width="14.2" height="1.2" fill="#1b2330"/><rect x="31" y="496.16" width="14.2" height="1.2" fill="#1b2330"/><rect x="4" y="498.42" width="14.2" height="1.2" fill="#1b2330"/><rect x="31" y="498.42" width="14.2" height="1.2" fill="#1b2330"/><rect x="4" y="500.68" width="14.2" height="1.2" fill="#1b2330"/><rect x="31" y="500.68" width="14.2" height="1.2" fill="#1b2330"/><rect x="4" y="502.94" width="14.2" height="1.2" fill="#1b2330"/><rect x="31" y="502.94" width="14.2" height="1.2" fill="#1b2330"/><rect x="4" y="505.21" width="14.2" height="1.2" fill="#1b2330"/><rect x="31" y="505.21" width="14.2" height="1.2" fill="#1b2330"/><rect x="4" y="507.47" width="14.2" height="1.2" fill="#1b2330"/><rect x="31" y="507.47" width="14.2" height="1.2" fill="#1b2330"/><rect x="4" y="509.73" width="14.2" height="1.2" fill="#1b2330"/><rect x="31" y="509.73" width="14.2" height="1.2" fill="#1b2330"/><rect x="4" y="511.99" width="14.2" height="1.2" fill="#1b2330"/><rect x="31" y="511.99" width="14.2" height="1.2" fill="#1b2330"/><rect x="4" y="514.25" width="14.2" height="1.2" fill="#1b2330"/><rect x="31" y="514.25" width="14.2" height="1.2" fill="#1b2330"/><rect x="4" y="516.52" width="14.2" height="1.2" fill="#1b2330"/><rect x="31" y="516.52" width="14.2" height="1.2" fill="#1b2330"/><rect x="4" y="518.78" width="14.2" height="1.2" fill="#1b2330"/><rect x="31" y="518.78" width="14.2" height="1.2" fill="#1b2330"/>
<rect x="4" y="330" width="14.2" height="190" fill="url(#mg)"/><rect x="31" y="330" width="14.2" height="190" fill="url(#mg)"/><defs><linearGradient id="mg" x1="0" y1="0" x2="0" y2="1"><stop offset="0" stop-color="#143264" stop-opacity="0"/><stop offset="1" stop-color="#143264" stop-opacity="0.22"/></linearGradient></defs>
<rect x="19.1" y="249.30" width="1.3" height="1.3" fill="#1d4f9a"/><rect x="29.2" y="249.30" width="1.3" height="1.3" fill="#1d4f9a"/><rect x="19.1" y="256.08" width="1.3" height="1.3" fill="#1d4f9a"/><rect x="29.2" y="256.08" width="1.3" height="1.3" fill="#1d4f9a"/><rect x="19.1" y="262.86" width="1.3" height="1.3" fill="#1d4f9a"/><rect x="29.2" y="262.86" width="1.3" height="1.3" fill="#1d4f9a"/><rect x="19.1" y="269.64" width="1.3" height="1.3" fill="#1d4f9a"/><rect x="29.2" y="269.64" width="1.3" height="1.3" fill="#1d4f9a"/><rect x="19.1" y="276.42" width="1.3" height="1.3" fill="#1d4f9a"/><rect x="29.2" y="276.42" width="1.3" height="1.3" fill="#1d4f9a"/><rect x="19.1" y="283.20" width="1.3" height="1.3" fill="#1d4f9a"/><rect x="29.2" y="283.20" width="1.3" height="1.3" fill="#1d4f9a"/><rect x="19.1" y="289.98" width="1.3" height="1.3" fill="#1d4f9a"/><rect x="29.2" y="289.98" width="1.3" height="1.3" fill="#1d4f9a"/><rect x="19.1" y="296.76" width="1.3" height="1.3" fill="#1d4f9a"/><rect x="29.2" y="296.76" width="1.3" height="1.3" fill="#1d4f9a"/><rect x="19.1" y="303.54" width="1.3" height="1.3" fill="#1d4f9a"/><rect x="29.2" y="303.54" width="1.3" height="1.3" fill="#1d4f9a"/><rect x="19.1" y="310.32" width="1.3" height="1.3" fill="#1d4f9a"/><rect x="29.2" y="310.32" width="1.3" height="1.3" fill="#1d4f9a"/><rect x="19.1" y="317.10" width="1.3" height="1.3" fill="#1d4f9a"/><rect x="29.2" y="317.10" width="1.3" height="1.3" fill="#1d4f9a"/><rect x="19.1" y="323.88" width="1.3" height="1.3" fill="#1d4f9a"/><rect x="29.2" y="323.88" width="1.3" height="1.3" fill="#1d4f9a"/><rect x="19.1" y="330.66" width="1.3" height="1.3" fill="#1d4f9a"/><rect x="29.2" y="330.66" width="1.3" height="1.3" fill="#1d4f9a"/><rect x="19.1" y="337.44" width="1.3" height="1.3" fill="#1d4f9a"/><rect x="29.2" y="337.44" width="1.3" height="1.3" fill="#1d4f9a"/><rect x="19.1" y="344.22" width="1.3" height="1.3" fill="#1d4f9a"/><rect x="29.2" y="344.22" width="1.3" height="1.3" fill="#1d4f9a"/><rect x="19.1" y="351.00" width="1.3" height="1.3" fill="#1d4f9a"/><rect x="29.2" y="351.00" width="1.3" height="1.3" fill="#1d4f9a"/><rect x="19.1" y="357.78" width="1.3" height="1.3" fill="#1d4f9a"/><rect x="29.2" y="357.78" width="1.3" height="1.3" fill="#1d4f9a"/><rect x="19.1" y="364.56" width="1.3" height="1.3" fill="#1d4f9a"/><rect x="29.2" y="364.56" width="1.3" height="1.3" fill="#1d4f9a"/><rect x="19.1" y="371.34" width="1.3" height="1.3" fill="#1d4f9a"/><rect x="29.2" y="371.34" width="1.3" height="1.3" fill="#1d4f9a"/><rect x="19.1" y="378.12" width="1.3" height="1.3" fill="#1d4f9a"/><rect x="29.2" y="378.12" width="1.3" height="1.3" fill="#1d4f9a"/><rect x="19.1" y="384.90" width="1.3" height="1.3" fill="#1d4f9a"/><rect x="29.2" y="384.90" width="1.3" height="1.3" fill="#1d4f9a"/><rect x="19.1" y="391.68" width="1.3" height="1.3" fill="#1d4f9a"/><rect x="29.2" y="391.68" width="1.3" height="1.3" fill="#1d4f9a"/><rect x="19.1" y="398.46" width="1.3" height="1.3" fill="#1d4f9a"/><rect x="29.2" y="398.46" width="1.3" height="1.3" fill="#1d4f9a"/><rect x="19.1" y="405.24" width="1.3" height="1.3" fill="#1d4f9a"/><rect x="29.2" y="405.24" width="1.3" height="1.3" fill="#1d4f9a"/><rect x="19.1" y="412.02" width="1.3" height="1.3" fill="#1d4f9a"/><rect x="29.2" y="412.02" width="1.3" height="1.3" fill="#1d4f9a"/><rect x="19.1" y="418.80" width="1.3" height="1.3" fill="#1d4f9a"/><rect x="29.2" y="418.80" width="1.3" height="1.3" fill="#1d4f9a"/><rect x="19.1" y="425.58" width="1.3" height="1.3" fill="#1d4f9a"/><rect x="29.2" y="425.58" width="1.3" height="1.3" fill="#1d4f9a"/><rect x="19.1" y="432.36" width="1.3" height="1.3" fill="#1d4f9a"/><rect x="29.2" y="432.36" width="1.3" height="1.3" fill="#1d4f9a"/><rect x="19.1" y="439.14" width="1.3" height="1.3" fill="#1d4f9a"/><rect x="29.2" y="439.14" width="1.3" height="1.3" fill="#1d4f9a"/><rect x="19.1" y="445.92" width="1.3" height="1.3" fill="#1d4f9a"/><rect x="29.2" y="445.92" width="1.3" height="1.3" fill="#1d4f9a"/><rect x="19.1" y="452.70" width="1.3" height="1.3" fill="#1d4f9a"/><rect x="29.2" y="452.70" width="1.3" height="1.3" fill="#1d4f9a"/><rect x="19.1" y="459.48" width="1.3" height="1.3" fill="#1d4f9a"/><rect x="29.2" y="459.48" width="1.3" height="1.3" fill="#1d4f9a"/><rect x="19.1" y="466.26" width="1.3" height="1.3" fill="#1d4f9a"/><rect x="29.2" y="466.26" width="1.3" height="1.3" fill="#1d4f9a"/><rect x="19.1" y="473.04" width="1.3" height="1.3" fill="#1d4f9a"/><rect x="29.2" y="473.04" width="1.3" height="1.3" fill="#1d4f9a"/><rect x="19.1" y="479.82" width="1.3" height="1.3" fill="#1d4f9a"/><rect x="29.2" y="479.82" width="1.3" height="1.3" fill="#1d4f9a"/><rect x="19.1" y="486.60" width="1.3" height="1.3" fill="#1d4f9a"/><rect x="29.2" y="486.60" width="1.3" height="1.3" fill="#1d4f9a"/><rect x="19.1" y="493.38" width="1.3" height="1.3" fill="#1d4f9a"/><rect x="29.2" y="493.38" width="1.3" height="1.3" fill="#1d4f9a"/><rect x="19.1" y="500.16" width="1.3" height="1.3" fill="#1d4f9a"/><rect x="29.2" y="500.16" width="1.3" height="1.3" fill="#1d4f9a"/><rect x="19.1" y="506.94" width="1.3" height="1.3" fill="#1d4f9a"/><rect x="29.2" y="506.94" width="1.3" height="1.3" fill="#1d4f9a"/><rect x="19.1" y="513.72" width="1.3" height="1.3" fill="#1d4f9a"/><rect x="29.2" y="513.72" width="1.3" height="1.3" fill="#1d4f9a"/><rect x="19.1" y="520.50" width="1.3" height="1.3" fill="#1d4f9a"/><rect x="29.2" y="520.50" width="1.3" height="1.3" fill="#1d4f9a"/>
</svg>
<div class="t" style="left:18px;width:13.6px;text-align:center;top:278.6px;font-size:8.6px;color:#2d6ed4;transform:scaleX(0.9);transform-origin:6.8px 0">5</div>
<div class="t" style="left:18px;width:13.6px;text-align:center;top:313.1px;font-size:8.6px;color:#2d6ed4;transform:scaleX(0.9);transform-origin:6.8px 0">10</div>
<div class="t" style="left:18px;width:13.6px;text-align:center;top:347.1px;font-size:8.6px;color:#2d6ed4;transform:scaleX(0.9);transform-origin:6.8px 0">15</div>
<div class="t" style="left:18px;width:13.6px;text-align:center;top:381.1px;font-size:8.6px;color:#2d6ed4;transform:scaleX(0.9);transform-origin:6.8px 0">20</div>
<div class="t" style="left:18px;width:13.6px;text-align:center;top:414.6px;font-size:8.6px;color:#2d6ed4;transform:scaleX(0.9);transform-origin:6.8px 0">25</div>
<div class="t" style="left:18px;width:13.6px;text-align:center;top:448.6px;font-size:8.6px;color:#2d6ed4;transform:scaleX(0.9);transform-origin:6.8px 0">30</div>
<div class="t" style="left:18px;width:13.6px;text-align:center;top:482.6px;font-size:8.6px;color:#2d6ed4;transform:scaleX(0.9);transform-origin:6.8px 0">35</div>
<svg style="left:0;top:0" width="64" height="542" viewBox="0 0 64 542">
<rect x="46.8" y="248" width="12.6" height="275" fill="#f7f7f7"/>
<rect x="51.9" y="257" width="3.3" height="252.5" rx="1.6" fill="#b6b6b6"/>
<g stroke="#cdcdcd" stroke-width="0.8"><path d="M48 504.3H50M57.3 504.3H59.3M48 479.3H50M57.3 479.3H59.3M48 454.3H50M57.3 454.3H59.3M48 429.3H50M57.3 429.3H59.3M48 404.3H50M57.3 404.3H59.3M48 379.3H50M57.3 379.3H59.3M48 354.3H50M57.3 354.3H59.3M48 329.3H50M57.3 329.3H59.3M48 304.3H50M57.3 304.3H59.3M48 279.3H50M57.3 279.3H59.3M48 254.3H50M57.3 254.3H59.3"/></g>
<rect x="48.3" y="249" width="10.4" height="9.6" fill="#b8b8b8" stroke="#8e8e8e" stroke-width="0.7"/>
<rect x="49" y="250.5" width="9" height="1" fill="#d2d2d2"/><rect x="49" y="253" width="9" height="1.1" fill="#2a2a2a"/><rect x="49" y="256" width="9" height="1" fill="#d0d0d0"/>
<circle cx="54" cy="517" r="5" stroke="#222" stroke-width="1.2" fill="#f4f4f4"/>
<rect x="53.3" y="513.8" width="1.6" height="6.4" fill="#888"/>
</svg>

<!-- content -->
<!-- tab strip -->
<div class="a" style="left:62px;top:74px;width:1px;height:453px;background:#e2e2e2"></div>
<div class="a" style="left:64px;top:77px;width:61px;height:17px;border:1px solid #e0e0e0"></div>
<div class="a" style="left:65px;top:78px;width:59px;height:15px;background:#fff;border:1.2px solid #b6b6b6"></div>
<svg style="left:0;top:0" width="640" height="120" viewBox="0 0 640 120">
<line x1="70.2" y1="89.3" x2="77.6" y2="81.9" stroke="#111" stroke-width="2.6" stroke-linecap="round"/><line x1="76" y1="83.5" x2="77.2" y2="82.3" stroke="#fff" stroke-width="0.9"/>
<circle cx="71" cy="82" r="0.6" fill="#aaa"/><circle cx="78.2" cy="85.2" r="0.6" fill="#aaa"/>
<path d="M111.2 84.3L115.6 88.7M115.6 84.3L111.2 88.7" stroke="#333" stroke-width="1.1"/>
<path d="M625 83.2H631.4L628.2 86.8Z" fill="#111"/>
</svg>
<div class="t" style="left:80.5px;top:81px;font-size:8.8px;color:#1a1a2a;transform:scaleX(0.9);transform-origin:0 0">Wizard</div>
<!-- description -->
<div class="a" style="left:63px;top:94px;width:572px;height:18.5px;background:#fff;border:1px solid #e4e4e4;border-bottom-color:#dcdcdc"></div>
<div class="t" style="left:68.6px;top:100.2px;font-size:8.8px;color:#111;transform:scaleX(0.917);transform-origin:0 0">The Wizard provides different entry points to several functions of the software</div>
<!-- panel -->
<div class="a" style="left:63px;top:112px;width:573px;height:412px;background:#f0f0f0;border:1px solid #dcdcdc;border-top:none;border-right-width:2px;border-bottom-width:2px"></div>
<svg style="left:0;top:0" width="640" height="542" viewBox="0 0 640 542">
<defs><clipPath id="c5"><rect x="282.3" y="322.3" width="123.7" height="122.7" rx="14"/></clipPath></defs>
<rect x="117.8" y="164" width="125.6" height="124" rx="14.5" fill="#f8f8f8" stroke="#f8f8f8" stroke-width="1"/>
<rect x="118.3" y="164.5" width="124.6" height="123" rx="14" fill="#c6c6c6"/>
<rect x="281.8" y="164" width="124.7" height="124" rx="14.5" fill="#f8f8f8" stroke="#f8f8f8" stroke-width="1"/>
<rect x="282.3" y="164.5" width="123.7" height="123" rx="14" fill="#c6c6c6"/>
<rect x="444.9" y="164" width="124.8" height="124" rx="14.5" fill="#f8f8f8" stroke="#f8f8f8" stroke-width="1"/>
<rect x="445.4" y="164.5" width="123.8" height="123" rx="14" fill="#c6c6c6"/>
<rect x="118" y="321.8" width="125.4" height="123.7" rx="14.5" fill="#f8f8f8" stroke="#f8f8f8" stroke-width="1"/>
<rect x="118.5" y="322.3" width="124.4" height="122.7" rx="14" fill="#c6c6c6"/>
<rect x="281.8" y="321.8" width="124.7" height="123.7" rx="14.5" fill="#f8f8f8" stroke="#f8f8f8" stroke-width="1"/>
<rect x="282.3" y="322.3" width="123.7" height="122.7" rx="14" fill="#c6c6c6"/>
<rect x="450.7" y="321.8" width="124.6" height="123.7" rx="14.5" fill="#f8f8f8" stroke="#f8f8f8" stroke-width="1"/>
<rect x="451.2" y="322.3" width="123.6" height="122.7" rx="14" fill="#c6c6c6"/>
<g fill="#2c3c64"><path d="M144.3 210.6H149.9V241.4H144.3V219.6L140.4 222.3L138.2 217.4Z"/><path d="M153.8 219.4L164.1 227L153.8 234.8Z"/><path d="M190.5 219.4L200.8 227L190.5 234.8Z"/></g>
<g stroke="#2c3c64" stroke-width="5.6" fill="none"><path d="M169.1 219V217.4Q169.1 213.4 173.1 213.4H180.2Q184.2 213.4 184.2 217.4V222.5Q184.2 225.8 181.2 227.2L172.2 231.6Q169.1 233.1 169.1 236.5V241.4"/><path d="M166.3 238.6H186.9"/><path d="M204.6 219V217.4Q204.6 213.4 208.6 213.4H216Q220 213.4 220 217.4V234.6Q220 238.6 216 238.6H208.6Q204.6 238.6 204.6 234.6V233"/><path d="M207 226.2H220"/></g>
<rect x="329.8" y="190.4" width="28.2" height="49" rx="14.1" fill="#2c3c64"/>
<path d="M321.7 218.6V225.5A22.3 22.3 0 0 0 366.3 225.5V218.6" stroke="#2c3c64" stroke-width="6" fill="none" stroke-linecap="round"/>
<rect x="341" y="246" width="6" height="12" fill="#2c3c64"/><rect x="327.6" y="256.8" width="32.6" height="5.6" rx="2.8" fill="#2c3c64"/>
<path d="M487 202.5L526.5 226.2L487 250Z" fill="#2c3c64" stroke="#2c3c64" stroke-width="6.5" stroke-linejoin="round"/>
<g fill="#6a7592"><path d="M183.8 352.6L215.7 349.1V379H209.8V356L189.6 358.3V385H183.8Z"/><ellipse cx="178.6" cy="385" rx="8.6" ry="6.6" transform="rotate(-18 178.6 385)"/><ellipse cx="204.8" cy="379.6" rx="8.4" ry="6.4" transform="rotate(-18 204.8 379.6)"/></g>
<circle cx="180" cy="384.8" r="18" stroke="#2c3c64" stroke-width="7.2" fill="none"/>
<path d="M165.5 399.5L144.8 418.6" stroke="#2c3c64" stroke-width="9.8" stroke-linecap="round"/><path d="M168 397L163 402" stroke="#2c3c64" stroke-width="6"/>
<path clip-path="url(#c5)" d="M282 372 L284 372 L286.7 372 L288 372 L289.6 372 L291 372 L293.2 372 L294.5 372 L296.1 372 L298.4 372 L300 375 L301.9 375 L304 375 L305.5 375 L307.2 375 L309 375 L311 375 L313 375 L315 376 L316.8 375 L319 377 L322 375 L324 378 L325.9 375 L328 378 L331.3 375 L333 378 L336 380 L338 380 L339.6 375 L341 376 L343.1 375 L345 375 L347 375 L350 375 L352 376 L355.3 375 L357 376 L360.5 375 L362 376 L364 375 L366.7 375 L368 375 L369.6 375 L371 376 L373 378 L375 380 L377.2 381.4 L379 379 L381 376 L384 375 L387.7 375 L389 375 L391.2 375 L393 375 L396 376 L398 377 L399.4 375 L401 375 L403 375 L405.2 375 L407 375 L407 392 L405.2 392 L403 392 L401 392 L399.4 392 L398 390 L396 391 L393 392 L391.2 392 L389 392 L387.7 392 L384 392 L381 391 L379 388 L377.2 385.8 L375 387 L373 389 L371 391 L369.6 392 L368 392 L366.7 392 L364 392 L362 391 L360.5 392 L357 391 L355.3 392 L352 391 L350 388 L347 392 L345 392 L343.1 392 L341 391 L339.6 392 L338 386 L336 386 L333 388 L331.3 392 L328 389 L325.9 392 L324 389 L322 392 L319 390 L316.8 392 L315 391 L313 392 L311 392 L309 392 L307.2 392 L305.5 392 L304 392 L301.9 392 L300 392 L298.4 398 L296.1 398 L294.5 398 L293.2 398 L291 398 L289.6 398 L288 398 L286.7 398 L284 398 L282 393Z M281.05 372H282.95V393H281.05Z M283.05 366.6H284.95V400.8H283.05Z M285.75 356H287.65V411H285.75Z M287.05 362H288.95V404H287.05Z M288.65 357.8H290.55V405H288.65Z M290.05 362H291.95V410H290.05Z M292.25 348H294.15V417H292.25Z M293.55 360H295.45V413H293.55Z M295.15 350.8H297.05V416.5H295.15Z M297.45 369H299.35V402H297.45Z M299.05 372H300.95V398H299.05Z M300.95 364H302.85V402.5H300.95Z M303.05 373H304.95V396H303.05Z M304.55 371H306.45V397H304.55Z M306.25 361H308.15V404H306.25Z M308.05 374H309.95V394H308.05Z M310.05 375H311.95V392H310.05Z M312.05 355H313.95V413H312.05Z M314.05 376H315.95V391H314.05Z M315.85 371H317.75V396H315.85Z M318.05 377H319.95V390H318.05Z M321.05 366.6H322.95V400H321.05Z M323.05 378H324.95V389H323.05Z M324.95 373.6H326.85V393H324.95Z M327.05 378H328.95V389H327.05Z M330.35 370H332.25V397H330.35Z M332.05 378H333.95V388H332.05Z M335.05 380H336.95V386H335.05Z M337.05 380H338.95V386H337.05Z M338.65 367H340.55V402.5H338.65Z M340.05 376H341.95V391H340.05Z M342.15 362H344.05V404H342.15Z M344.05 370H345.95V395H344.05Z M346.05 374H347.95V393H346.05Z M349.05 374H350.95V388H349.05Z M351.05 376H352.95V391H351.05Z M354.35 370H356.25V397H354.35Z M356.05 376H357.95V391H356.05Z M359.55 348H361.45V419H359.55Z M361.05 376H362.95V391H361.05Z M363.05 367H364.95V400H363.05Z M365.75 361H367.65V407H365.75Z M367.05 374H368.95V393H367.05Z M368.65 343H370.55V424H368.65Z M370.05 376H371.95V391H370.05Z M372.05 378H373.95V389H372.05Z M374.05 380H375.95V387H374.05Z M376.25 381.4H378.15V385.8H376.25Z M378.05 379H379.95V388H378.05Z M380.05 376H381.95V391H380.05Z M383.05 375H384.95V392H383.05Z M386.75 372.7H388.65V394.6H386.75Z M388.05 375H389.95V392H388.05Z M390.25 367H392.15V400H390.25Z M392.05 375H393.95V392H392.05Z M395.05 376H396.95V391H395.05Z M397.05 377H398.95V390H397.05Z M398.45 354H400.35V412H398.45Z M400.05 375H401.95V392H400.05Z M402.05 374H403.95V394H402.05Z M404.25 370H406.15V396H404.25Z M406.05 372H407.95V395H406.05Z" fill="#2c3c64"/>
<circle cx="510.1" cy="378.4" r="39.2" fill="#697389"/><circle cx="510.1" cy="378.4" r="36.8" stroke="#e4e6ea" stroke-width="1" fill="none"/>
<circle cx="510.1" cy="378.6" r="9.8" stroke="#f4f4f4" stroke-width="1.9" fill="none"/><circle cx="510.1" cy="378.6" r="2.2" fill="#f4f4f4"/>
<path d="M492.5 400.5H530V388.5L556.5 410.2L530 433.5V420.5H492.5Q491 420.5 491 419V402Q491 400.5 492.5 400.5Z" fill="#2c3c64" stroke="#2c3c64" stroke-width="1.5" stroke-linejoin="round"/>
</svg>
<div class="t" style="left:99.6px;width:160px;text-align:center;top:291.05px;font-size:8.8px;color:#2f3a6c;white-space:pre;-webkit-text-stroke:0.15px #2f3a6c;transform:scaleX(0.88);transform-origin:80px 0">Use First Steps Wizard</div>
<div class="t" style="left:262.8px;width:160px;text-align:center;top:291.05px;font-size:8.8px;color:#2f3a6c;white-space:pre;-webkit-text-stroke:0.15px #2f3a6c;transform:scaleX(0.88);transform-origin:80px 0">Audio Recorder</div>
<div class="t" style="left:426.3px;width:160px;text-align:center;top:291.05px;font-size:8.8px;color:#2f3a6c;white-space:pre;-webkit-text-stroke:0.15px #2f3a6c;transform:scaleX(0.88);transform-origin:80px 0">Playback Audio File</div>
<div class="t" style="left:99.8px;width:160px;text-align:center;top:448.65px;font-size:8.8px;color:#2f3a6c;white-space:pre;-webkit-text-stroke:0.15px #2f3a6c;transform:scaleX(0.88);transform-origin:80px 0">Track Scan + Processing</div>
<div class="t" style="left:263.2px;width:160px;text-align:center;top:448.65px;font-size:8.8px;color:#2f3a6c;white-space:pre;-webkit-text-stroke:0.15px #2f3a6c;transform:scaleX(0.88);transform-origin:80px 0">Edit Audio File</div>
<div class="t" style="left:432px;width:160px;text-align:center;top:448.65px;font-size:8.8px;color:#2f3a6c;white-space:pre;-webkit-text-stroke:0.15px #2f3a6c;transform:scaleX(0.88);transform-origin:80px 0">Import Audio CDROM</div>

<!-- checkbox -->
<div class="a" style="left:70px;top:507.8px;width:9.6px;height:9.2px;border:1.2px solid #4a4a4a;background:#f6f6f6"></div>
<svg style="left:0;top:0" width="640" height="542" viewBox="0 0 640 542"><path d="M71.8 512.2L74.2 514.8L78.2 509.8" stroke="#222" stroke-width="1.2" fill="none"/></svg>
<div class="t" style="left:80.9px;top:508.8px;font-size:8.8px;color:#1a1a2a;transform:scaleX(0.9);transform-origin:0 0">Show this Wizard on Program Startup</div>

<!-- status bar -->
<div class="a" style="left:1px;top:527px;width:638px;height:1px;background:#e0e0e0"></div>
<div class="a" style="left:516px;top:528px;width:1px;height:13px;background:#dcdcdc"></div>
<div class="a" style="left:523px;top:528px;width:1px;height:13px;background:#dcdcdc"></div>
<div class="a" style="left:531px;top:528px;width:1px;height:13px;background:#dcdcdc"></div>
<div class="a" style="left:538px;top:528px;width:1px;height:13px;background:#dcdcdc"></div>
<div class="a" style="left:607px;top:528px;width:1px;height:13px;background:#dcdcdc"></div>
<svg style="left:0;top:0" width="640" height="542" viewBox="0 0 640 542"><g fill="#cccccc"><rect x="636" y="532" width="1" height="1"/><rect x="634" y="534" width="1" height="1"/><rect x="636" y="534" width="1" height="1"/><rect x="632" y="536" width="1" height="1"/><rect x="634" y="536" width="1" height="1"/><rect x="636" y="536" width="1" height="1"/><rect x="630" y="538" width="1" height="1"/><rect x="632" y="538" width="1" height="1"/><rect x="634" y="538" width="1" height="1"/><rect x="636" y="538" width="1" height="1"/></g></svg>
</body></html>
